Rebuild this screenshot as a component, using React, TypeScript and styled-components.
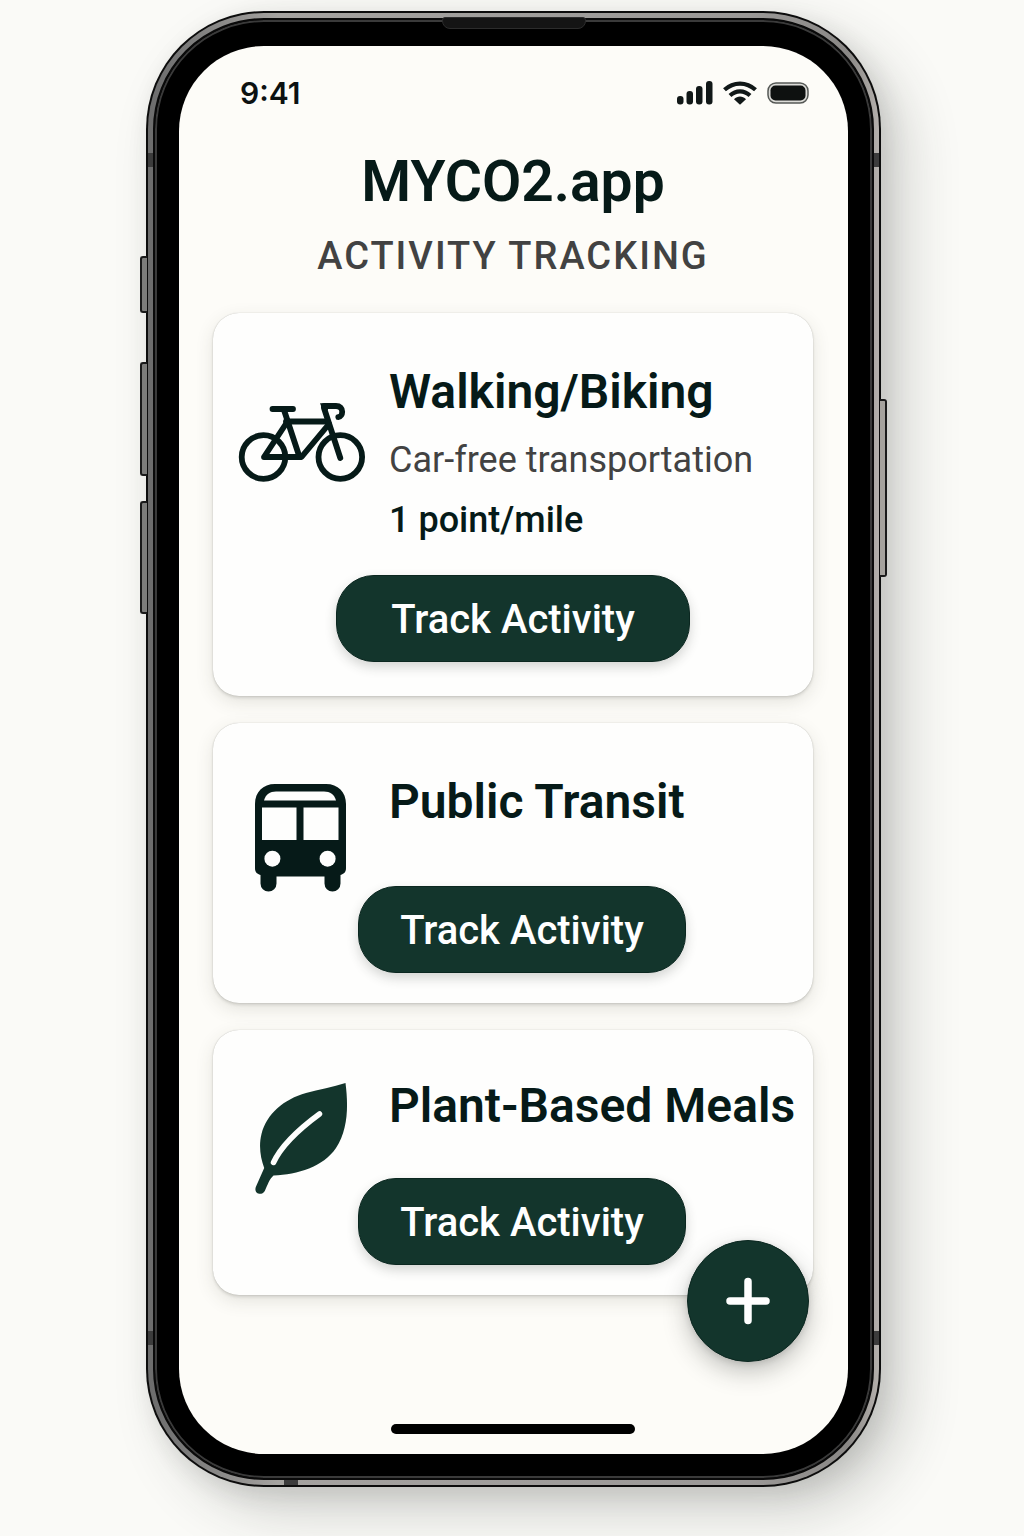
import React from "react";
import styled, { createGlobalStyle } from "styled-components";

const ink = "#061a18";
const green = "#13352c";

const GlobalStyle = createGlobalStyle`
  *, *::before, *::after { box-sizing: border-box; }
  body {
    margin: 0;
    background: #fafaf7;
    font-family: Roboto, "Liberation Sans", sans-serif;
    color: ${ink};
    -webkit-font-smoothing: antialiased;
  }
  h1, h2, p { margin: 0; }
`;

const Page = styled.div`
  min-height: 100vh;
  display: flex;
  justify-content: center;
  align-items: flex-start;
  padding: 11px 16px 49px 19px;
  overflow: hidden;
`;

/* Outermost dark edge with the metal rail inside it */
const Phone = styled.div`
  position: relative;
  width: 100%;
  max-width: 735px;
  padding: 2px;
  border-radius: 118px;
  background: #0c0c0c;
  box-shadow: 24px 24px 56px rgba(40, 44, 40, 0.2), 6px 8px 24px rgba(40, 44, 40, 0.12);
`;

const Rail = styled.div`
  padding: 5px;
  border-radius: 116px;
  background: linear-gradient(90deg, #6c6c6c 0, #777 30px, #a5a3a0 130px, #9b9997 600px, #8a8886 700px, #b4b0ac 100%);
`;

const Bezel = styled.div`
  padding: 26px 24px 24px;
  border: 2px solid #0a0a0a;
  border-radius: 111px;
  background: #000;
  box-shadow: inset 0 0 0 2px #3a3a3a;
`;

const Screen = styled.main`
  position: relative;
  display: flex;
  flex-direction: column;
  padding: 24px 35px 20px 34px;
  border-radius: 85px;
  background: #fdfcf8;
`;

const Speaker = styled.div`
  position: absolute;
  top: 6px;
  left: 50%;
  width: 144px;
  height: 12px;
  margin-left: -72px;
  border: 1px solid #2c2c2c;
  border-radius: 3px 3px 8px 8px;
  background: #141414;
`;

const SideKey = styled.div<{ $side: "left" | "right"; $top: number; $height: number }>`
  position: absolute;
  ${(p) => p.$side}: -6px;
  top: ${(p) => p.$top}px;
  width: 7px;
  height: ${(p) => p.$height}px;
  border: 2px solid #1a1a1a;
  border-${(p) => (p.$side === "left" ? "right" : "left")}-width: 0;
  border-radius: ${(p) => (p.$side === "left" ? "3px 0 0 3px" : "0 3px 3px 0")};
  background: ${(p) => (p.$side === "left" ? "#7d7d7b" : "#a5a29d")};
`;

const Band = styled.div<{ $edge: "left" | "right" | "bottom"; $at: number }>`
  position: absolute;
  ${(p) => p.$edge}: 2px;
  ${(p) => (p.$edge === "bottom" ? "left" : "top")}: ${(p) => p.$at}px;
  width: ${(p) => (p.$edge === "bottom" ? 14 : 5)}px;
  height: ${(p) => (p.$edge === "bottom" ? 5 : 14)}px;
  background: #3c3c3c;
`;

const StatusBar = styled.div`
  display: flex;
  justify-content: space-between;
  align-items: center;
  height: 46px;
  padding: 0 4px 0 27px;
`;

const Clock = styled.span`
  font-family: Inter, "Liberation Sans", sans-serif;
  font-size: 30px;
  font-weight: 600;
  line-height: 46px;
  color: #0c1111;
`;

const StatusIcons = styled.div`
  display: flex;
  align-items: center;
  gap: 10px;
`;

const Header = styled.header`
  margin-top: 32px;
  text-align: center;
`;

const AppName = styled.h1`
  font-size: 57px;
  font-weight: 600;
  line-height: 68px;
`;

const Subtitle = styled.p`
  margin-top: 16px;
  font-size: 38px;
  font-weight: 500;
  line-height: 48px;
  letter-spacing: 2px;
  color: #424242;
`;

const Activities = styled.div`
  display: flex;
  flex-direction: column;
  gap: 27px;
  margin-top: 33px;
`;

const Card = styled.article<{ $size: "full" | "medium" | "compact" }>`
  padding: ${(p) => ({ full: "49px 0 34px", medium: "49px 0 30px", compact: "46px 0 30px" })[p.$size]};
  border-radius: 26px;
  background: #fefefd;
  box-shadow: 0 0 1px rgba(60, 60, 50, 0.35), 0 2px 3px rgba(60, 60, 50, 0.14), 0 6px 18px rgba(60, 60, 50, 0.13);
`;

const Summary = styled.div`
  display: grid;
  grid-template-columns: 128px 1fr;
  column-gap: 24px;
  padding-left: 24px;
`;

const IconSlot = styled.div<{ $drop: number }>`
  display: flex;
  justify-content: center;
  height: 0;
  padding-top: ${(p) => p.$drop}px;
`;

const CardTitle = styled.h2`
  font-size: 48px;
  font-weight: 600;
  line-height: 60px;
  white-space: nowrap;
`;

const Detail = styled.p<{ $strong?: boolean }>`
  font-size: 36px;
  font-weight: ${(p) => (p.$strong ? 500 : 400)};
  line-height: 60px;
  color: ${(p) => (p.$strong ? ink : "#424242")};
`;

const Details = styled.div`
  margin-top: 8px;
`;

const Actions = styled.div<{ $gap: number; $shifted?: boolean }>`
  display: flex;
  justify-content: center;
  margin-top: ${(p) => p.$gap}px;
  padding-left: ${(p) => (p.$shifted ? 18 : 0)}px;
`;

const TrackButton = styled.button<{ $wide?: boolean }>`
  width: ${(p) => (p.$wide ? 354 : 328)}px;
  height: 87px;
  padding: 2px 0 0;
  border: 1px solid #0b2720;
  border-radius: 38px;
  background: ${green};
  box-shadow: 0 5px 12px rgba(40, 44, 40, 0.2);
  font-family: Roboto, "Liberation Sans", sans-serif;
  font-size: 40px;
  font-weight: 500;
  color: #fff;
  cursor: pointer;
`;

const AddButton = styled.button`
  position: absolute;
  right: 39px;
  bottom: 92px;
  display: flex;
  align-items: center;
  justify-content: center;
  width: 122px;
  height: 122px;
  padding: 0;
  border: 1px solid #0b2720;
  border-radius: 50%;
  background: ${green};
  box-shadow: 0 10px 24px rgba(40, 44, 40, 0.28), 0 2px 6px rgba(40, 44, 40, 0.14);
  cursor: pointer;
`;

const HomeIndicator = styled.div`
  align-self: center;
  width: 244px;
  height: 10px;
  margin-top: 129px;
  border-radius: 5px;
  background: #000;
`;

const Signal = () => (
  <svg width="36" height="24" viewBox="0 0 36 24" fill="#111818" aria-hidden="true">
    <rect x="0" y="15" width="6.500" height="8.500" rx="3" />
    <rect x="9.500" y="10" width="6.500" height="13.500" rx="3" />
    <rect x="19" y="5" width="6.500" height="18.500" rx="3" />
    <rect x="29" y="0" width="6.500" height="23.500" rx="3" />
  </svg>
);

const Wifi = () => (
  <svg width="34" height="24" viewBox="0 0 34 24" aria-hidden="true">
    <g fill="none" stroke="#111818" strokeWidth="4.200">
      <path d="M1.500 8.800C10.500 .5 23.500 .5 32.500 8.800" />
      <path d="M7 14.500C13 9 21 9 27 14.500" />
    </g>
    <path d="M11 18.300C14.500 14.600 19.500 14.600 23 18.300L17 23.800Z" fill="#111818" />
  </svg>
);

const Battery = () => (
  <svg width="42" height="22" viewBox="0 0 42 22" aria-hidden="true">
    <rect x="1" y="1" width="40" height="20" rx="8" fill="#dcdcd8" stroke="#555855" strokeWidth="1.500" />
    <rect x="3.500" y="3.500" width="35" height="15" rx="5" fill="#0e1110" />
  </svg>
);

const Bike = () => (
  <svg width="128" height="80" viewBox="0 0 128 80" fill="none" stroke={ink} strokeWidth="5.800" strokeLinecap="round" strokeLinejoin="round" aria-hidden="true">
    <circle cx="26.500" cy="55" r="21.800" />
    <circle cx="103.300" cy="55" r="21.800" />
    <path d="M35.500 7H56" />
    <path d="M47 8L62.500 55" />
    <path d="M49 19.500H89" />
    <path d="M92 22L64.500 55H27L49.500 21" />
    <path d="M87 6L103.300 56" />
    <path d="M87 4H99C103 4 105.200 6.500 105.200 9.700C105.200 12.500 103.500 15 101.300 15.200" />
    <path d="M83 1.200H90L91 8L86 9Z" fill={ink} stroke="none" />
  </svg>
);

const Bus = () => (
  <svg width="92" height="108" viewBox="0 0 92 108" aria-hidden="true">
    <path d="M20 0H71C83 0 91 8 91 20V84C91 88 89.500 89.500 85.500 91V99.500A8 8 0 0 1 69.500 99.500V92.500H21.500V99.500A8 8 0 0 1 5.500 99.500V91C1.500 89.500 0 88 0 84V20C0 8 8 0 20 0Z" fill={ink} />
    <g fill="#fefefd">
      <path d="M9 16.500C10.500 10.500 15 7.500 21 7.500H69C75 7.500 79.500 10.500 81 16.500Z" />
      <rect x="7" y="23.500" width="34.500" height="32.500" />
      <rect x="48.500" y="23.500" width="35" height="32.500" />
      <circle cx="17.400" cy="74.700" r="8" />
      <circle cx="72.600" cy="74.700" r="8" />
    </g>
  </svg>
);

const Leaf = () => (
  <svg width="94" height="112" viewBox="0 0 94 112" aria-hidden="true">
    <path d="M91.500 1C94.500 24 94 48 82 66C69 85 44 92.500 19.500 93.500C15.500 97 13.500 103 10.800 109C7.500 114.500-.5 111.500 1.800 105L10.200 86C6.500 76 4.500 64 7.500 52C12.500 32 30 17 52 11C65 7.500 79 5 91.500 1Z" fill={green} />
    <path d="M19.500 80.500C26 66.500 41 50 65.500 32" fill="none" stroke="#fefefd" strokeWidth="5.500" strokeLinecap="round" />
  </svg>
);

const Plus = () => (
  <svg width="44" height="48" viewBox="0 0 44 48" fill="none" stroke="#fff" strokeWidth="7.500" strokeLinecap="round" aria-hidden="true">
    <path d="M22 4.500V43.500M4 24H40" />
  </svg>
);

type Activity = {
  name: string;
  icon: React.ReactNode;
  drop: number;
  gap: number;
  size: "full" | "medium" | "compact";
  description?: string;
  reward?: string;
};

const activities: Activity[] = [
  {
    name: "Walking/Biking",
    icon: <Bike />,
    drop: 40,
    gap: 25,
    size: "full",
    description: "Car-free transportation",
    reward: "1 point/mile",
  },
  { name: "Public Transit", icon: <Bus />, drop: 12, gap: 54, size: "medium" },
  { name: "Plant-Based Meals", icon: <Leaf />, drop: 6, gap: 42, size: "compact" },
];

const ActivityCard = ({ name, icon, drop, gap, size, description, reward }: Activity) => (
  <Card $size={size}>
    <Summary>
      <IconSlot $drop={drop}>{icon}</IconSlot>
      <div>
        <CardTitle>{name}</CardTitle>
        {description && (
          <Details>
            <Detail>{description}</Detail>
            <Detail $strong>{reward}</Detail>
          </Details>
        )}
      </div>
    </Summary>
    <Actions $gap={gap} $shifted={!description}>
      <TrackButton type="button" $wide={!!description}>Track Activity</TrackButton>
    </Actions>
  </Card>
);

export default function App() {
  return (
    <Page>
      <GlobalStyle />
      <Phone>
        <SideKey $side="left" $top={245} $height={57} />
        <SideKey $side="left" $top={351} $height={114} />
        <SideKey $side="left" $top={490} $height={113} />
        <SideKey $side="right" $top={388} $height={178} />
        <Rail>
          <Bezel>
            <Screen>
              <StatusBar>
                <Clock>9:41</Clock>
                <StatusIcons>
                  <Signal />
                  <Wifi />
                  <Battery />
                </StatusIcons>
              </StatusBar>
              <Header>
                <AppName>MYCO2.app</AppName>
                <Subtitle>ACTIVITY TRACKING</Subtitle>
              </Header>
              <Activities>
                {activities.map((a) => (
                  <ActivityCard key={a.name} {...a} />
                ))}
              </Activities>
              <HomeIndicator />
              <AddButton type="button" aria-label="Add activity">
                <Plus />
              </AddButton>
            </Screen>
          </Bezel>
        </Rail>
        <Speaker />
        <Band $edge="left" $at={142} />
        <Band $edge="right" $at={142} />
        <Band $edge="left" $at={1320} />
        <Band $edge="right" $at={1320} />
        <Band $edge="bottom" $at={138} />
      </Phone>
    </Page>
  );
}
